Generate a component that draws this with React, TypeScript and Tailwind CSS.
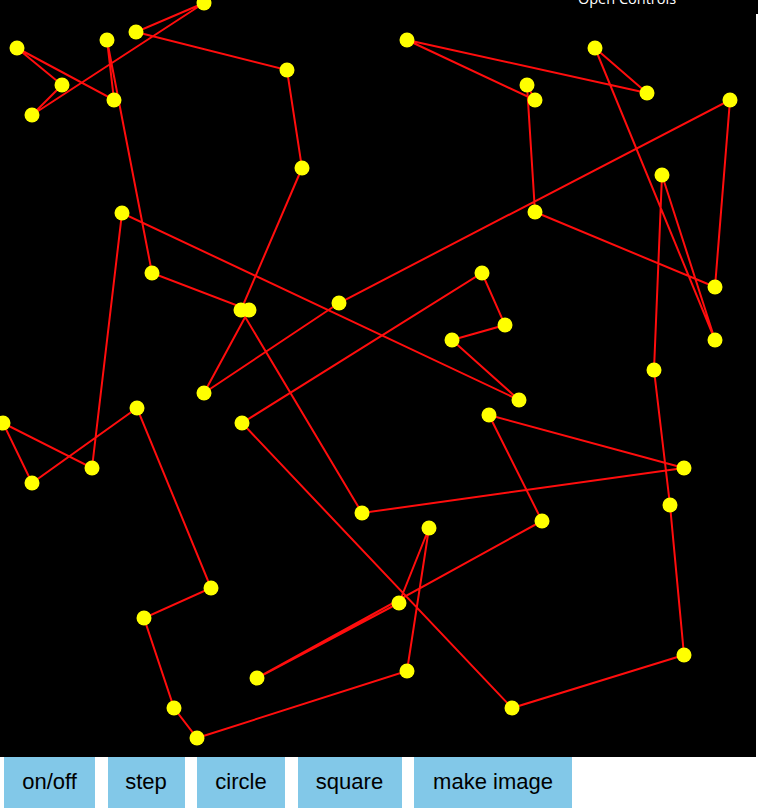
const tour: [number, number][] = [
  [527, 85], [535, 212], [715, 287], [730, 100], [339, 303], [204, 393], [249, 310], [152, 273],
  [107, 40], [114, 100], [17, 48], [62, 85], [32, 115], [204, 3], [136, 32], [287, 70],
  [302, 168], [241, 310], [362, 513], [684, 468], [489, 415], [542, 521], [257, 678], [399, 603],
  [429, 528], [407, 671], [197, 738], [174, 708], [144, 618], [211, 588], [137, 408], [32, 483],
  [3, 423], [92, 468], [122, 213], [519, 400], [452, 340], [505, 325], [482, 273], [242, 423],
  [512, 708], [684, 655], [670, 505], [654, 370], [662, 175], [715, 340], [595, 48], [647, 93],
  [407, 40], [535, 100],
];

const buttons = [
  { label: "on/off", cls: "w-[91px]" },
  { label: "step", cls: "w-[77px]" },
  { label: "circle", cls: "w-[88px]" },
  { label: "square", cls: "w-[104px]" },
  { label: "make image", cls: "w-[158px]" },
];

export default function App() {
  const points = tour.map(([x, y]) => `${x},${y}`).join(" ");

  return (
    <div className="relative w-[758px] h-[810px] bg-white overflow-hidden">
      <svg width={756} height={757} className="block bg-black">
        <polygon points={points} fill="none" stroke="#ff0d0d" strokeWidth={2} strokeLinejoin="miter" />
        {tour.map(([x, y], i) => (
          <circle key={i} cx={x} cy={y} r={7.5} fill="#ffff00" />
        ))}
      </svg>

      {/* controls toggle, scrolled partly out of view */}
      <div className="absolute top-0 right-0 w-[245px] h-[14px] bg-black">
        <div className="absolute left-0 right-[17px] top-[-8px] text-center text-white text-[14.5px] leading-[14.5px] font-['Open_Sans',sans-serif]">
          Open Controls
        </div>
      </div>

      <div className="flex gap-[12.5px] pl-[4px]">
        {buttons.map((b) => (
          <button
            key={b.label}
            className={`${b.cls} h-[51px] bg-[#82c8e8] text-black text-[22px] leading-[22px] pb-[1px] font-['Liberation_Sans',Arial,sans-serif] flex items-center justify-center`}
          >
            {b.label}
          </button>
        ))}
      </div>
    </div>
  );
}
